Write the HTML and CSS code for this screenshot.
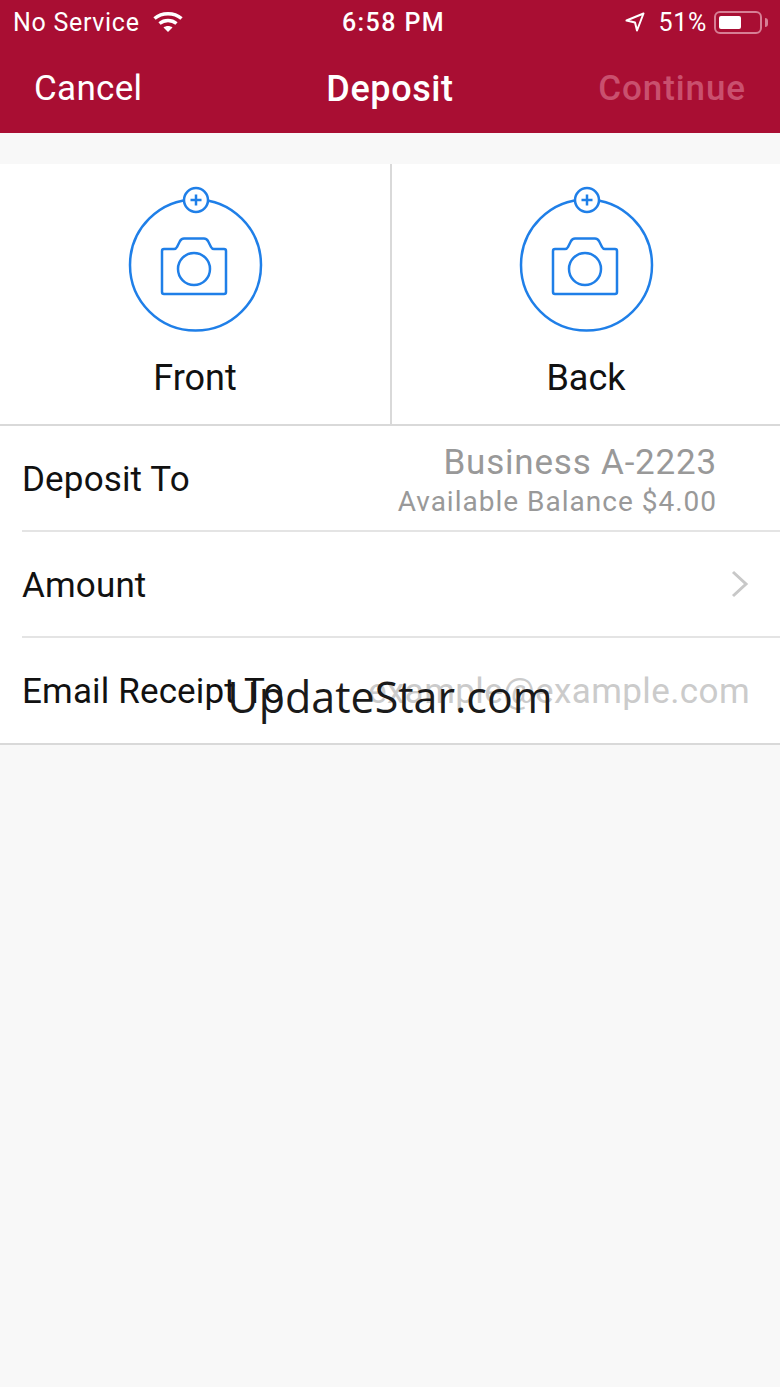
FILE: index.html
```html
<!DOCTYPE html>
<html lang="en">

<head>
 <meta charset="UTF-8">
 <meta name="viewport" content="width=device-width, initial-scale=1.0">
 <title>Deposit</title>
 <link rel="stylesheet" href="styles.css">
</head>

<body>
 <div class="header">
  <div class="status-bar">
   <div class="status-left">
    <span>No Service</span>
    <svg class="wifi" width="30" height="22" viewBox="0 0 30 22">
     <path d="M1.5 7.5C9 1 21 1 28.500 7.500" />
     <path d="M6.500 12.500C11.500 8.500 18.500 8.500 23.500 12.500" />
     <path class="wifi-dot" d="M10.500 16.500C13 14.500 17 14.500 19.500 16.500L15 21Z" />
    </svg>
   </div>
   <div class="status-time">6:58 PM</div>
   <div class="status-right">
    <svg class="arrow" width="20" height="20" viewBox="0 0 20 20">
     <path d="M18.500 1.500L1.500 8.500L10 10.500L12 18.500Z" />
    </svg>
    <span>51%</span>
    <div class="battery">
     <div class="battery-level"></div>
    </div>
    <div class="battery-tip"></div>
   </div>
  </div>
  <div class="nav-bar">
   <div class="nav-cancel">Cancel</div>
   <div class="nav-title">Deposit</div>
   <div class="nav-continue">Continue</div>
  </div>
 </div>

 <div class="photos">
  <div class="photo">
   <svg class="photo-icon" width="136" height="146" viewBox="0 0 136 146">
    <use href="#capture" />
   </svg>
   <div class="photo-label">Front</div>
  </div>
  <div class="photo">
   <svg class="photo-icon" width="136" height="146" viewBox="0 0 136 146">
    <use href="#capture" />
   </svg>
   <div class="photo-label">Back</div>
  </div>
 </div>

 <div class="list">
  <div class="row">
   <div class="row-label">Deposit To</div>
   <div class="account">
    <div class="account-name">Business A-2223</div>
    <div class="account-balance">Available Balance $4.00</div>
   </div>
  </div>
  <div class="row">
   <div class="row-label">Amount</div>
   <svg class="chevron" width="20" height="28" viewBox="0 0 20 28">
    <path d="M3 2L16 14L3 26" />
   </svg>
  </div>
  <div class="row">
   <div class="row-label">Email Receipt To</div>
   <div class="placeholder">example@example.com</div>
  </div>
 </div>

 <div class="watermark">UpdateStar.com</div>

 <!-- shared camera icon -->
 <svg class="icon-defs" width="0" height="0">
  <defs>
   <g id="capture">
    <circle cx="68.500" cy="79" r="65.500" />
    <circle class="plus-ring" cx="69" cy="14" r="12" />
    <path d="M69 8.500V19.500M63.500 14H74.500" />
    <path d="M35 65Q35 63 37 63H47Q49 63 50 61L53 55Q54.500 52.500 57 52.500H77Q79.500 52.500 81 55L84 61Q85 63 87 63H97Q99 63 99 65V106Q99 108 97 108H37Q35 108 35 106Z" />
    <circle cx="67" cy="83" r="16" />
   </g>
  </defs>
 </svg>
</body>

</html>
```
FILE: styles.css
```css
html,
body {
 margin: 0;
 padding: 0;
}

body {
 position: relative;
 width: 780px;
 height: 1387px;
 overflow: hidden;
 background-color: #f8f8f8;
 font-family: Roboto, "Liberation Sans", sans-serif;
 color: #111;
}

.header {
 height: 133px;
 background-color: #a90e33;
 color: #fff;
}

.status-bar {
 display: grid;
 grid-template-columns: 1fr auto 1fr;
 align-items: center;
 height: 44px;
 padding: 0 12px 0 13px;
 font-size: 25px;
 letter-spacing: 0.7px;
}

.status-left {
 display: flex;
 align-items: center;
 gap: 13px;
}

.wifi {
 fill: none;
 stroke: #fff;
 stroke-width: 3.500;
}

.wifi-dot {
 fill: #fff;
 stroke: none;
}

.status-time {
 margin-left: 6px;
 font-weight: 500;
 letter-spacing: 1.400px;
}

.status-right {
 display: flex;
 align-items: center;
 justify-content: flex-end;
}

.arrow {
 fill: none;
 stroke: #fff;
 stroke-width: 2;
 stroke-linejoin: round;
 margin-right: 13px;
}

.battery {
 box-sizing: border-box;
 width: 48px;
 height: 23px;
 margin-left: 7px;
 padding: 3px;
 border: 2px solid #d77f95;
 border-radius: 6px;
}

.battery-level {
 width: 22px;
 height: 100%;
 background-color: #fff;
 border-radius: 2px;
}

.battery-tip {
 width: 3px;
 height: 9px;
 margin-left: 3px;
 background-color: #d77f95;
 border-radius: 0 3px 3px 0;
}

.nav-bar {
 display: grid;
 grid-template-columns: 1fr auto 1fr;
 align-items: center;
 height: 89px;
 padding: 0 34px;
 font-size: 35px;
 letter-spacing: 0.3px;
}

.nav-title {
 font-size: 36px;
 font-weight: 500;
 letter-spacing: 0.6px;
}

.nav-continue {
 justify-self: end;
 font-weight: 500;
 letter-spacing: 0.9px;
 color: #c9506e;
}

.photos {
 display: grid;
 grid-template-columns: 392px 1fr;
 height: 260px;
 margin-top: 31px;
 background-color: #fff;
 border-bottom: 2px solid #d9d9d9;
}

.photo {
 display: flex;
 flex-direction: column;
 align-items: center;
 padding-top: 22px;
}

.photo:first-child {
 border-right: 2px solid #d9d9d9;
}

.photo-icon {
 fill: none;
 stroke: #1f7fe8;
 stroke-width: 2.500;
}

.plus-ring {
 fill: #fff;
}

.photo-label {
 margin-top: 24px;
 font-size: 36px;
 line-height: 44px;
}

.icon-defs {
 position: absolute;
}

.list {
 background-color: #fff;
 border-bottom: 2px solid #d9d9d9;
}

.row {
 display: flex;
 align-items: center;
 justify-content: space-between;
 box-sizing: border-box;
 height: 106px;
 margin-left: 22px;
 padding-top: 2px;
 padding-right: 30px;
 border-bottom: 2px solid #e4e4e4;
 font-size: 35px;
}

.row:last-child {
 height: 105px;
 border-bottom: none;
}

.row-label {
 letter-spacing: 0.15px;
}

.account {
 margin-right: 33px;
 padding-top: 4px;
 text-align: right;
 color: #999;
}

.account-name {
 font-size: 35px;
 line-height: 42px;
 letter-spacing: 0.8px;
}

.account-balance {
 font-size: 28px;
 line-height: 36px;
 letter-spacing: 1px;
}

.chevron {
 margin-bottom: 2px;
 fill: none;
 stroke: #c8c8c8;
 stroke-width: 3;
}

.placeholder {
 letter-spacing: 0.4px;
 color: #cbcbcb;
}

/* site stamp over the page */
.watermark {
 position: absolute;
 top: 667px;
 left: 0;
 width: 100%;
 text-align: center;
 font-family: "Open Sans", sans-serif;
 font-size: 43px;
 line-height: 60px;
 color: #1a1a1a;
}
```
